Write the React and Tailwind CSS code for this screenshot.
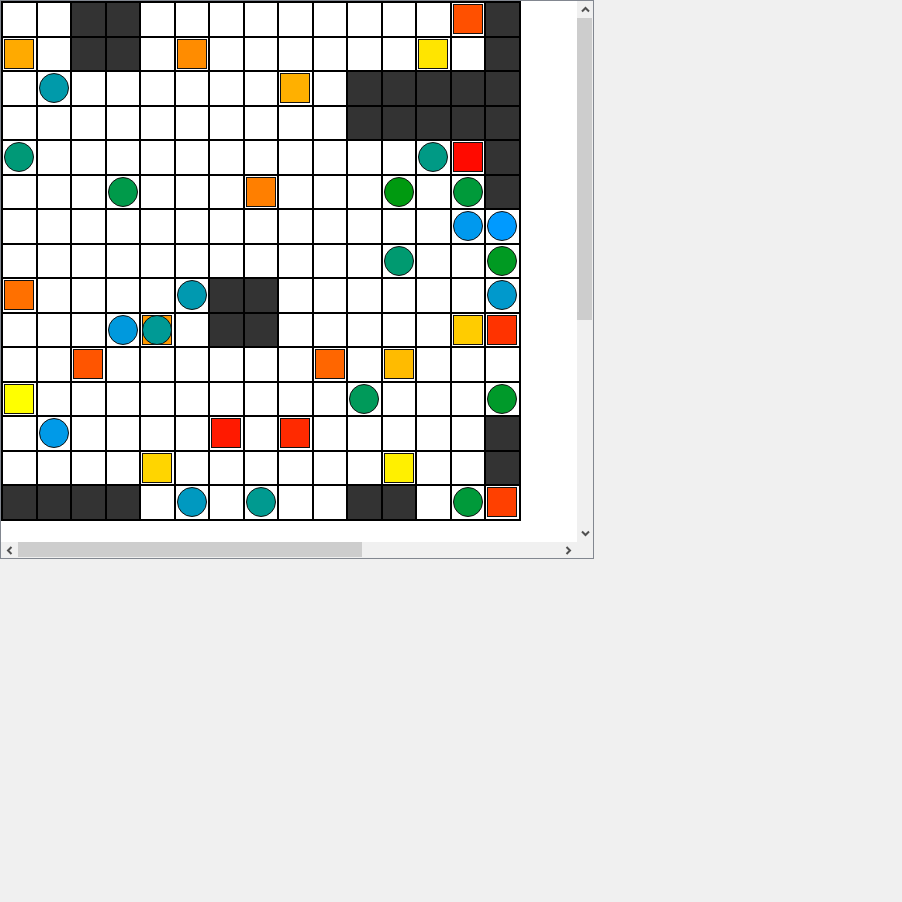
const D = 'dark';

// each cell: null | 'dark' | { sq: color, ci: color }
const board = [
  [null, null, D, D, null, null, null, null, null, null, null, null, null, { sq: '#ff5000' }, D],
  [{ sq: '#ffaa00' }, null, D, D, null, { sq: '#ff8c00' }, null, null, null, null, null, null, { sq: '#ffe500' }, null, D],
  [null, { ci: '#009aaa' }, null, null, null, null, null, null, { sq: '#ffb000' }, null, D, D, D, D, D],
  [null, null, null, null, null, null, null, null, null, null, D, D, D, D, D],
  [{ ci: '#009977' }, null, null, null, null, null, null, null, null, null, null, null, { ci: '#009a85' }, { sq: '#ff0a00' }, D],
  [null, null, null, { ci: '#009a4a' }, null, null, null, { sq: '#ff7f00' }, null, null, null, { ci: '#009a10' }, null, { ci: '#009a3a' }, D],
  [null, null, null, null, null, null, null, null, null, null, null, null, null, { ci: '#0099ee' }, { ci: '#009aff' }],
  [null, null, null, null, null, null, null, null, null, null, null, { ci: '#009a70' }, null, null, { ci: '#009a22' }],
  [{ sq: '#ff7000' }, null, null, null, null, { ci: '#0099b0' }, D, D, null, null, null, null, null, null, { ci: '#0099cc' }],
  [null, null, null, { ci: '#0099dd' }, { sq: '#ff9900', ci: '#009a95' }, null, D, D, null, null, null, null, null, { sq: '#ffcc00' }, { sq: '#ff3300' }],
  [null, null, { sq: '#ff5500' }, null, null, null, null, null, null, { sq: '#ff6600' }, null, { sq: '#ffbb00' }, null, null, null],
  [{ sq: '#ffff00' }, null, null, null, null, null, null, null, null, null, { ci: '#009a5a' }, null, null, null, { ci: '#009a2a' }],
  [null, { ci: '#009ae8' }, null, null, null, null, { sq: '#ff1a00' }, null, { sq: '#ff2a00' }, null, null, null, null, null, D],
  [null, null, null, null, { sq: '#ffd500' }, null, null, null, null, null, null, { sq: '#fff000' }, null, null, D],
  [D, D, D, D, null, { ci: '#0099c0' }, null, { ci: '#009a90' }, null, null, D, D, null, { ci: '#009a3a' }, { sq: '#ff4000' }],
];

function Cell({ cell }) {
  if (cell === D) return <div className="h-[32.5px] w-[32.5px] bg-[#333333]" />;
  return (
    <div className="relative flex h-[32.5px] w-[32.5px] items-center justify-center bg-white">
      {cell?.sq && (
        <div className="h-[30px] w-[30px] border border-[#111]" style={{ backgroundColor: cell.sq }} />
      )}
      {cell?.ci && (
        <div
          className="absolute left-1/2 top-1/2 h-[30px] w-[30px] -translate-x-1/2 -translate-y-1/2 rounded-full border border-[#111]"
          style={{ backgroundColor: cell.ci }}
        />
      )}
    </div>
  );
}

const arrows = {
  up: 'M1 5.5 L4.5 2 L8 5.5',
  down: 'M1 1.5 L4.5 5 L8 1.5',
  left: 'M5.5 1 L2 4.5 L5.5 8',
  right: 'M1.5 1 L5 4.5 L1.5 8',
};

function Arrow({ dir }) {
  const vertical = dir === 'up' || dir === 'down';
  return (
    <svg width={vertical ? 9 : 7} height={vertical ? 7 : 9} viewBox={vertical ? '0 0 9 7' : '0 0 7 9'}>
      <path d={arrows[dir]} fill="none" stroke="#505050" strokeWidth="2" />
    </svg>
  );
}

export default function App() {
  return (
    <div className="min-h-screen bg-[#f0f0f0]">
      <div className="flex h-[559px] w-[594px] flex-col border border-[#828790] bg-white">
        <div className="flex h-[541px]">
          <div className="w-[576px] overflow-hidden">
            <div className="grid w-fit grid-cols-[repeat(15,32.5px)] gap-[2px] bg-black p-[2px]">
              {board.flatMap((row, r) => row.map((cell, c) => <Cell key={`${r}-${c}`} cell={cell} />))}
            </div>
          </div>
          <div className="flex w-[16px] flex-col bg-[#f0f0f0]">
            <div className="flex h-[17px] items-center justify-center"><Arrow dir="up" /></div>
            <div className="mr-px h-[302px] bg-[#cdcdcd]" />
            <div className="flex-1" />
            <div className="flex h-[17px] items-center justify-center"><Arrow dir="down" /></div>
          </div>
        </div>
        <div className="flex h-[16px]">
          <div className="flex w-[576px] bg-[#f0f0f0]">
            <div className="flex w-[17px] items-center justify-center"><Arrow dir="left" /></div>
            <div className="mb-px w-[344px] bg-[#cdcdcd]" />
            <div className="flex-1" />
            <div className="flex w-[17px] items-center justify-center"><Arrow dir="right" /></div>
          </div>
          <div className="w-[16px] bg-[#f0f0f0]" />
        </div>
      </div>
    </div>
  );
}
